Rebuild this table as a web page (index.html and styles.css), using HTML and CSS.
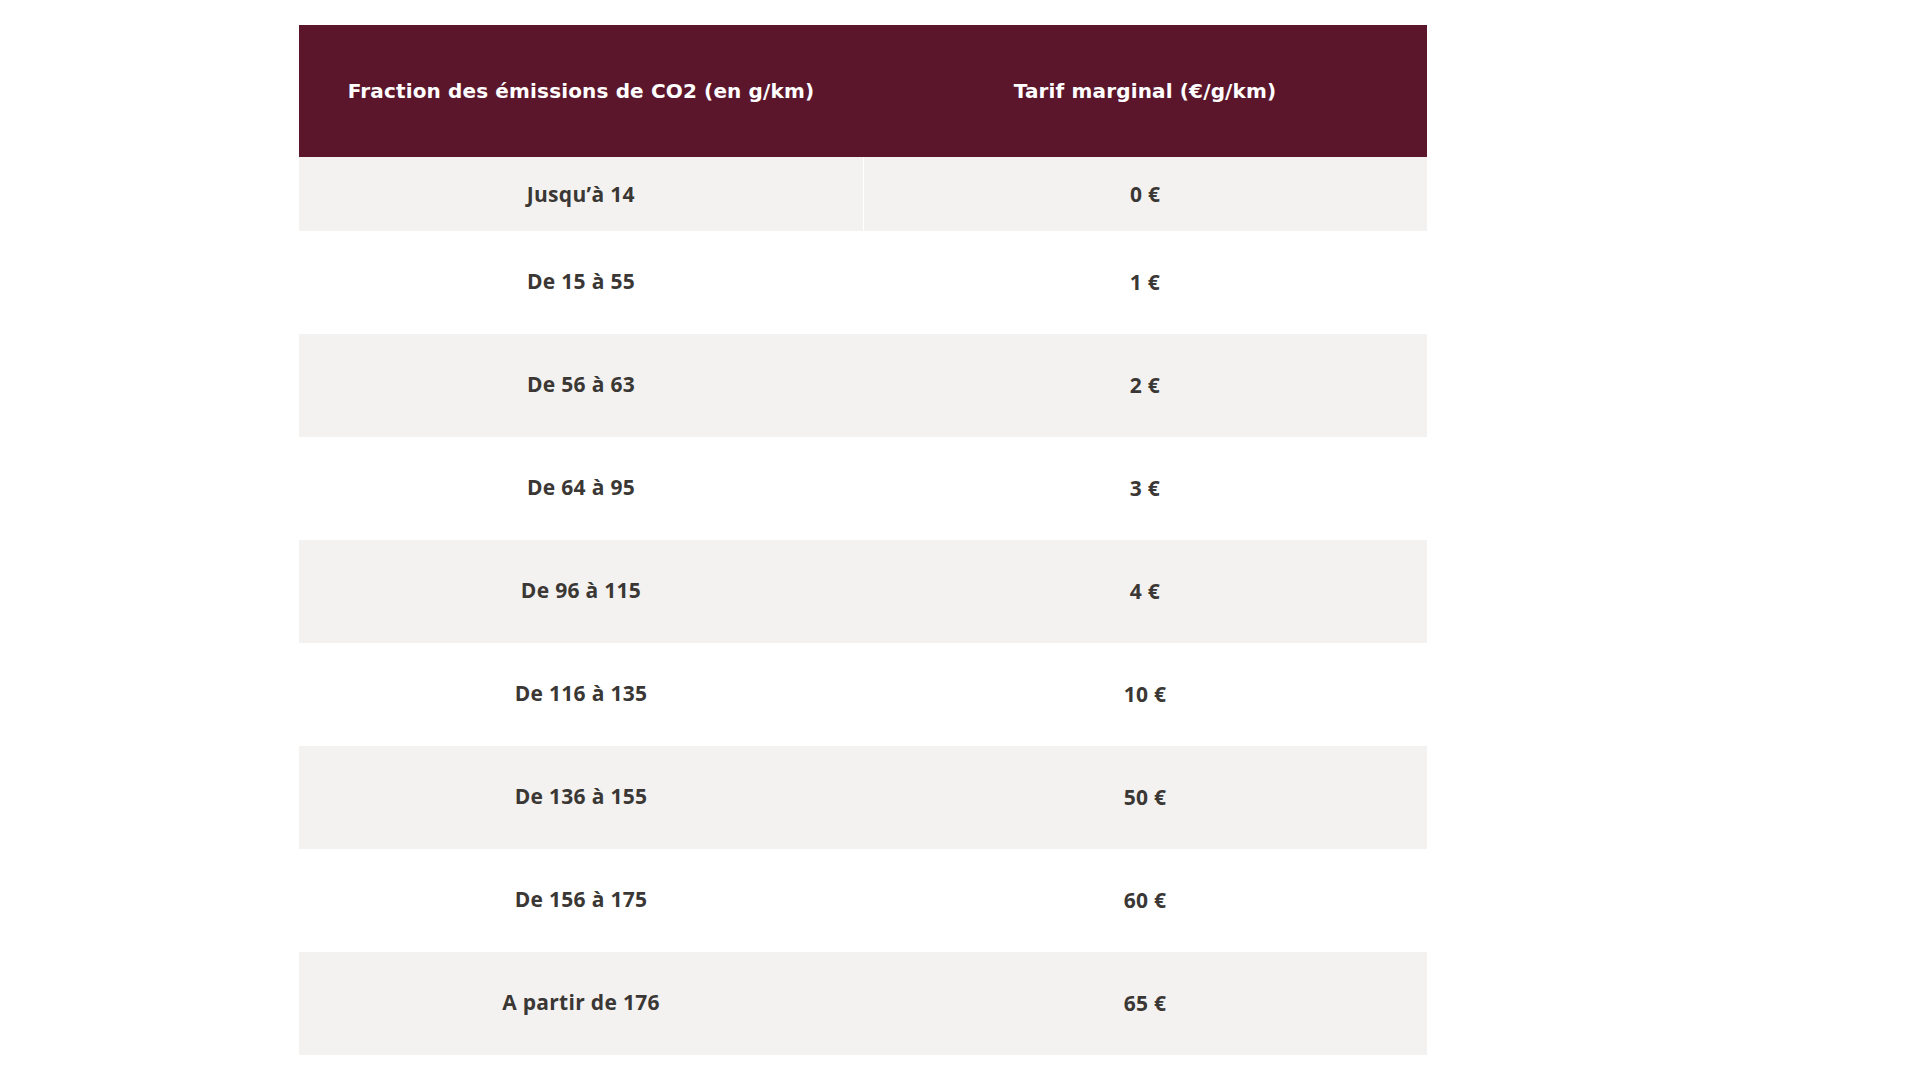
FILE: index.html
```html
<!DOCTYPE html>
<html lang="fr">
<head>
<meta charset="utf-8">
<title>Tarif marginal CO2</title>
<link rel="stylesheet" href="styles.css">
</head>
<body>
<main class="page">
  <table class="tariff">
    <thead>
      <tr>
        <th>Fraction des émissions de CO2 (en g/km)</th>
        <th>Tarif marginal (€/g/km)</th>
      </tr>
    </thead>
    <tbody>
      <tr class="first"><td>Jusqu’à 14</td><td>0 €</td></tr>
      <tr><td>De 15 à 55</td><td>1 €</td></tr>
      <tr><td>De 56 à 63</td><td>2 €</td></tr>
      <tr><td>De 64 à 95</td><td>3 €</td></tr>
      <tr><td>De 96 à 115</td><td>4 €</td></tr>
      <tr><td>De 116 à 135</td><td>10 €</td></tr>
      <tr><td>De 136 à 155</td><td>50 €</td></tr>
      <tr><td>De 156 à 175</td><td>60 €</td></tr>
      <tr><td>A partir de 176</td><td>65 €</td></tr>
    </tbody>
  </table>
</main>
</body>
</html>
```

FILE: styles.css
```css
html, body {
  margin: 0;
  padding: 0;
  background: #ffffff;
}

.page {
  padding: 25px 0 0 299px;
}

.tariff {
  width: 1128px;
  border-collapse: collapse;
  table-layout: fixed;
  font-weight: 700;
}

.tariff th {
  background: #5c162b;
  color: #ffffff;
  height: 132px;
  padding: 0;
  text-align: center;
  vertical-align: middle;
  font-family: "DejaVu Sans", "Open Sans", sans-serif;
  font-size: 20px;
  letter-spacing: 0.15px;
}

.tariff td {
  color: #3a3734;
  height: 100px;
  padding: 0 0 3px 0;
  text-align: center;
  vertical-align: middle;
  font-family: "Open Sans", "DejaVu Sans", sans-serif;
  font-size: 21px;
  letter-spacing: 0.3px;
}

.tariff td + td {
  padding-bottom: 1px;
  height: 102px;
}

.tariff tbody tr:nth-child(odd) td {
  background: #f3f2f0;
}

.tariff tr.first td {
  height: 74px;
  padding: 0;
}

.tariff tr.first td:first-child {
  border-right: 1px solid #ffffff;
}
```
